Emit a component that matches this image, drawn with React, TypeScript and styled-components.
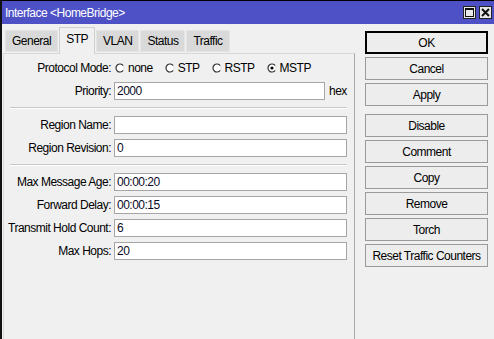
import { FC, Fragment } from 'react';
import styled, { createGlobalStyle } from 'styled-components';

const GlobalStyle = createGlobalStyle`
  body {
    margin: 0;
    background: #f0f0f0;
    font-family: "Liberation Sans", Arial, sans-serif;
    font-size: 12px;
    letter-spacing: -0.5px;
    color: #000;
  }
`;

const Window = styled.div`
  width: 494px;
  height: 339px;
  box-sizing: border-box;
  border-top: 1px solid #000;
  border-left: 2px solid #111;
  background: #f0f0f0;
  overflow: hidden;
  display: flex;
  flex-direction: column;
`;

const TitleBar = styled.div`
  height: 23px;
  flex: none;
  background: #4e50c6;
  color: #fff;
  display: flex;
  align-items: center;
  justify-content: space-between;
  padding: 0 2px 0 3px;
`;

const TitleText = styled.span`
  font-size: 12px;
`;

const WinButtons = styled.div`
  display: flex;
  gap: 3px;
`;

const WinButton = styled.div`
  width: 13px;
  height: 13px;
  box-sizing: border-box;
  border: 1px solid #222;
  background: #e8e8e8;
  display: flex;
  align-items: center;
  justify-content: center;
`;

const Body = styled.div`
  flex: 1;
  display: flex;
  padding-top: 3px;
`;

const LeftPane = styled.div`
  width: 352px;
  margin-left: 1px;
  display: flex;
  flex-direction: column;
`;

const Tabs = styled.div`
  height: 26px;
  display: flex;
  align-items: flex-end;
  gap: 1px;
  padding-left: 2px;
  position: relative;
  z-index: 1;
`;

const Tab = styled.div<{ $active?: boolean }>`
  box-sizing: border-box;
  height: ${({ $active }) => ($active ? '27px' : '22px')};
  margin-bottom: ${({ $active }) => ($active ? '-1px' : '1px')};
  padding: ${({ $active }) => ($active ? '4px 6px 0' : '3px 6px 0')};
  background: ${({ $active }) => ($active ? '#f0f0f0' : '#d9d9d9')};
  border: 1px solid ${({ $active }) => ($active ? '#d0d0d0' : '#e4e4e4')};
  border-bottom: ${({ $active }) => ($active ? 'none' : '1px solid #e4e4e4')};
  font-size: 12px;
  white-space: nowrap;
`;

const Panel = styled.div`
  flex: 1;
  border-top: 1px solid #d8d8d8;
  border-left: 1px solid #dcdcdc;
  border-right: 1px solid #a8a8a8;
  padding: 5px 7px 0 0;
`;

const Form = styled.div`
  display: grid;
  grid-template-columns: 107px 1fr;
  column-gap: 3px;
  row-gap: 5px;
  align-items: center;
`;

const Label = styled.label`
  text-align: right;
  white-space: nowrap;
  font-size: 12px;
`;

const Field = styled.div`
  display: flex;
  align-items: center;
  height: 18px;
  gap: 4px;
`;

const Input = styled.div`
  flex: 1;
  height: 18px;
  box-sizing: border-box;
  background: #fff;
  border: 1px solid #a6a6a6;
  padding: 1px 2px 0;
  font-size: 12px;
  line-height: 15px;
  color: #0a0a28;
`;

const Unit = styled.span`
  width: 18px;
  font-size: 12px;
`;

const Separator = styled.div`
  grid-column: 1 / -1;
  height: 1px;
  margin: 2px 0 2px 6px;
  background: #c8c8c8;
  border-bottom: 1px solid #fff;
`;

const RadioGroup = styled.div`
  display: flex;
  align-items: center;
  gap: 12px;
  height: 18px;
  padding-left: 1px;
`;

const RadioItem = styled.span`
  display: flex;
  align-items: center;
  gap: 3px;
`;

const ButtonColumn = styled.div`
  width: 123px;
  margin-left: 10px;
  padding-top: 4px;
  display: flex;
  flex-direction: column;
  gap: 3px;
`;

const Button = styled.div<{ $default?: boolean; $spaced?: boolean }>`
  height: 23px;
  box-sizing: border-box;
  border: ${({ $default }) => ($default ? '2px solid #000' : '1px solid #9a9a9a')};
  background: #ededed;
  display: flex;
  align-items: center;
  justify-content: center;
  font-size: 12px;
  margin-top: ${({ $spaced }) => ($spaced ? '5px' : '0')};
`;

const Radio: FC<{ checked?: boolean }> = ({ checked }) => (
  <svg width="10" height="10" viewBox="0 0 10 10">
    <circle cx="5" cy="5" r="4" fill="#fff" />
    <path d="M8.2 2.6 A4 4 0 1 0 8.2 7.4" fill="none" stroke="#333" strokeWidth="1.2" />
    <path d="M8.2 2.6 A4 4 0 0 1 8.2 7.4" fill="none" stroke="#e0e0e0" strokeWidth="1" />
    {checked && <circle cx="5" cy="5" r="1.6" fill="#000" />}
  </svg>
);

const modes = ['none', 'STP', 'RSTP', 'MSTP'];

const fieldsA = [
  { label: 'Region Name:', value: '' },
  { label: 'Region Revision:', value: '0' },
];

const fieldsB = [
  { label: 'Max Message Age:', value: '00:00:20' },
  { label: 'Forward Delay:', value: '00:00:15' },
  { label: 'Transmit Hold Count:', value: '6' },
  { label: 'Max Hops:', value: '20' },
];

const tabs = ['General', 'STP', 'VLAN', 'Status', 'Traffic'];

const buttons = [
  { text: 'OK', def: true },
  { text: 'Cancel' },
  { text: 'Apply' },
  { text: 'Disable', spaced: true },
  { text: 'Comment' },
  { text: 'Copy' },
  { text: 'Remove' },
  { text: 'Torch' },
  { text: 'Reset Traffic Counters' },
];

export default function App() {
  return (
    <>
      <GlobalStyle />
      <Window>
        <TitleBar>
          <TitleText>Interface &lt;HomeBridge&gt;</TitleText>
          <WinButtons>
            <WinButton>
              <svg width="9" height="9" viewBox="0 0 9 9">
                <rect x="0.5" y="0.5" width="8" height="8" fill="none" stroke="#111" />
                <line x1="0" y1="1.5" x2="9" y2="1.5" stroke="#111" strokeWidth="1" />
              </svg>
            </WinButton>
            <WinButton>
              <svg width="9" height="9" viewBox="0 0 9 9">
                <path d="M1 1 L8 8 M8 1 L1 8" stroke="#111" strokeWidth="2" />
              </svg>
            </WinButton>
          </WinButtons>
        </TitleBar>
        <Body>
          <LeftPane>
            <Tabs>
              {tabs.map((t) => (
                <Tab key={t} $active={t === 'STP'}>
                  {t}
                </Tab>
              ))}
            </Tabs>
            <Panel>
              <Form>
                <Label>Protocol Mode:</Label>
                <RadioGroup>
                  {modes.map((m) => (
                    <RadioItem key={m}>
                      <Radio checked={m === 'MSTP'} />
                      {m}
                    </RadioItem>
                  ))}
                </RadioGroup>
                <Label>Priority:</Label>
                <Field>
                  <Input>2000</Input>
                  <Unit>hex</Unit>
                </Field>
                <Separator />
                {fieldsA.map((f) => (
                  <Fragment key={f.label}>
                    <Label>{f.label}</Label>
                    <Field>
                      <Input>{f.value}</Input>
                    </Field>
                  </Fragment>
                ))}
                <Separator />
                {fieldsB.map((f) => (
                  <Fragment key={f.label}>
                    <Label>{f.label}</Label>
                    <Field>
                      <Input>{f.value}</Input>
                    </Field>
                  </Fragment>
                ))}
              </Form>
            </Panel>
          </LeftPane>
          <ButtonColumn>
            {buttons.map((b) => (
              <Button key={b.text} $default={b.def} $spaced={b.spaced}>
                {b.text}
              </Button>
            ))}
          </ButtonColumn>
        </Body>
      </Window>
    </>
  );
}
